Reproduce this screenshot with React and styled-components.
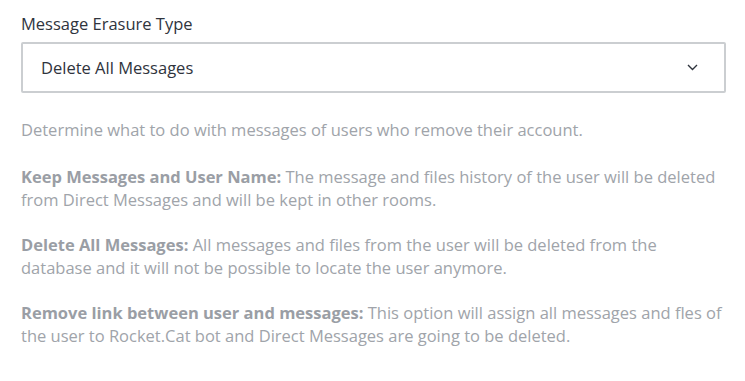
import styled, { createGlobalStyle } from 'styled-components';

const GlobalStyle = createGlobalStyle`
  body {
    margin: 0;
    background: #ffffff;
    font-family: "Open Sans", "Noto Sans", sans-serif;
    font-stretch: 95%;
  }
`;

const Field = styled.div`
  padding: 12px 20px 0 21px;
  width: 705px;
`;

const Label = styled.label`
  display: block;
  font-size: 16.5px;
  line-height: 24px;
  color: #2f343d;
  margin-bottom: 6px;
`;

const SelectBox = styled.div`
  box-sizing: border-box;
  height: 51px;
  border: 2px solid #cbced1;
  border-radius: 2px;
  display: flex;
  align-items: center;
  justify-content: space-between;
  padding: 0 26px 0 18px;
  font-size: 16.5px;
  color: #2f343d;
`;

const Chevron = () => (
  <svg width="11" height="7" viewBox="0 0 11 7">
    <path d="M1 1 L5.5 5.5 L10 1" fill="none" stroke="#2f343d" strokeWidth="1.4" />
  </svg>
);

const Description = styled.div`
  margin-top: 25px;
  color: #a0a4aa;
  font-size: 16.5px;
  line-height: 23px;
  white-space: nowrap;
`;

const Paragraph = styled.p`
  margin: 0 0 22px;
  &:first-child {
    margin-bottom: 24px;
  }
  b {
    font-weight: 700;
    color: #9a9ea5;
  }
`;

export default function App() {
  return (
    <>
      <GlobalStyle />
      <Field>
        <Label>Message Erasure Type</Label>
        <SelectBox>
          <span>Delete All Messages</span>
          <Chevron />
        </SelectBox>
        <Description>
          <Paragraph>Determine what to do with messages of users who remove their account.</Paragraph>
          <Paragraph>
            <b>Keep Messages and User Name:</b> The message and files history of the user will be deleted
            <br />
            from Direct Messages and will be kept in other rooms.
          </Paragraph>
          <Paragraph>
            <b>Delete All Messages:</b> All messages and files from the user will be deleted from the
            <br />
            database and it will not be possible to locate the user anymore.
          </Paragraph>
          <Paragraph>
            <b>Remove link between user and messages:</b> This option will assign all messages and fles of
            <br />
            the user to Rocket.Cat bot and Direct Messages are going to be deleted.
          </Paragraph>
        </Description>
      </Field>
    </>
  );
}
